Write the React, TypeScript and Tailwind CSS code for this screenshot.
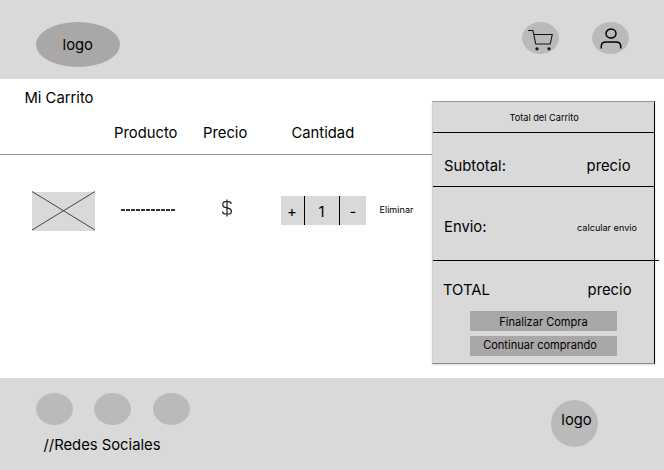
import React from "react";

function CartIcon() {
  return (
    <svg width="28" height="22" viewBox="0 0 28 22" fill="none" stroke="#111" strokeWidth="1.1" className="mt-[4px] shrink-0">
      <path d="M1 1.5H6L8.7 15H23.2L25.3 5.5H6.9" strokeLinejoin="round" />
      <circle cx="10" cy="19.8" r="1.1" fill="#222" />
      <circle cx="22" cy="19.8" r="1.1" fill="#222" />
    </svg>
  );
}

function UserIcon() {
  return (
    <svg width="22" height="22" viewBox="0 0 22 22" fill="none" stroke="#000" strokeWidth="1.5" className="mt-[3px] shrink-0">
      <ellipse cx="11" cy="5.5" rx="5" ry="4.5" />
      <path d="M1.3 20.5V18Q1.3 13.9 6 13.9H16Q20.7 13.9 20.7 18V20.5" />
    </svg>
  );
}

function Header() {
  return (
    <header className="flex h-[79px] items-start bg-[#d9d9d9]">
      <div className="ml-[35.5px] mt-[22px] flex h-[45px] w-[84.5px] items-center justify-center rounded-[50%] bg-[#a9a7a7]">
        logo
      </div>
      <div className="ml-auto mr-[35px] mt-[21.5px] flex gap-[33px]">
        <div className="flex h-[32px] w-[37px] items-center justify-center rounded-[50%] bg-[#bababa]">
          <CartIcon />
        </div>
        <div className="flex h-[32px] w-[37px] items-center justify-center rounded-[50%] bg-[#bababa]">
          <UserIcon />
        </div>
      </div>
    </header>
  );
}

function CartTable() {
  return (
    <section className="w-[432px] shrink-0 pt-[9px]">
      <h1 className="pl-[24.5px]">Mi Carrito</h1>
      <div className="-mr-px mt-[14px] flex h-[33px] border-b border-[#999] pl-[114px] pt-[0.6px]">
        <span className="w-[89px]">Producto</span>
        <span className="w-[88.5px]">Precio</span>
        <span>Cantidad</span>
      </div>
      <div className="flex pt-[36px]">
        <svg width="63" height="40" viewBox="0 0 63 40" className="ml-[32px] shrink-0">
          <rect y="1" width="63" height="39" fill="#d9d9d9" />
          <path d="M0 .5L63 39M0 39L63 .5" stroke="#444" strokeWidth="1" />
        </svg>
        <div className="ml-[26px] mt-[18px] h-[1.5px] w-[55px] bg-[repeating-linear-gradient(90deg,#333_0_4px,transparent_4px_5px)]" />
        <svg width="12" height="18" viewBox="0 0 12 18" fill="none" stroke="#222" strokeWidth="1.2" className="ml-[45px] mt-[8px]">
          <path d="M6 .5V17.5M10.2 5Q10 2.7 7.8 2.7H4.2Q1.8 2.7 1.8 5.4Q1.8 8 4.2 8.4L7.8 9.3Q10.4 9.9 10.4 12.5Q10.4 15 7.8 15H4.2Q1.8 15 1.5 12.7" />
        </svg>
        <div className="ml-[48px] mt-[5px] flex h-[29px] w-[85px] items-center bg-[#d9d9d9] text-center">
          <span className="h-full w-[23px] pr-px pt-[5.6px]">+</span>
          <span className="h-full w-[36px] border-x border-black pr-px pt-[5.6px]">1</span>
          <span className="h-full w-[26px] pt-[5.6px]">-</span>
        </div>
        <button className="ml-[13.5px] mt-[9px] h-[20px] text-[9.1px] leading-[20px]">Eliminar</button>
      </div>
    </section>
  );
}

function Summary() {
  return (
    <aside className="mt-[22px] h-[263px] w-[223px] shrink-0 border border-b-[#888] border-l-[#cfcfcf] border-r-black border-t-[#999] bg-[#d9d9d9] shadow-[0_1px_2px_rgba(0,0,0,0.15)]">
      <h2 className="h-[31px] border-b border-black pl-[76.5px] pt-[6px] text-[9.2px]">Total del Carrito</h2>
      <div className="flex h-[54px] justify-between border-b border-black pl-[11px] pr-[23.5px] pt-[22.6px]">
        <span>Subtotal:</span>
        <span>precio</span>
      </div>
      <div className="-mr-[5px] flex h-[74px] justify-between border-b border-black pl-[11px] pr-[22px] pt-[30px]">
        <span>Envio:</span>
        <span className="pt-[1px] text-[9.15px]">calcular envio</span>
      </div>
      <div className="flex justify-between pl-[10px] pr-[22.5px] pt-[19px]">
        <span>TOTAL</span>
        <span>precio</span>
      </div>
      <div className="ml-[37px] mt-[11px] flex w-[147px] flex-col gap-[5px] text-[11.05px] leading-[20px]">
        <button className="h-[20px] bg-[#a9a7a7]">
          <span className="block pt-px">Finalizar Compra</span>
        </button>
        <button className="flex h-[20px] items-start justify-center bg-[#a9a7a7] pr-[7px] leading-[19px]">
          Continuar comprando
        </button>
      </div>
    </aside>
  );
}

function Footer() {
  return (
    <footer className="flex h-[92px] items-start justify-between bg-[#d9d9d9]">
      <div className="pl-[36px] pt-[15px]">
        <div className="flex gap-[21.3px]">
          {[0, 1, 2].map((item) => (
            <div key={item} className="h-[32px] w-[37px] rounded-[50%] bg-[#bababa]" />
          ))}
        </div>
        <p className="ml-[7.5px] mt-[9.5px]">//Redes Sociales</p>
      </div>
      <div className="mr-[66px] mt-[22px] flex h-[47px] w-[47px] justify-center rounded-full bg-[#bababa] pl-[4px] pt-[10px]">
        logo
      </div>
    </footer>
  );
}

export default function App() {
  return (
    <div className="h-[470px] w-[664px] overflow-hidden bg-white font-['Inter',sans-serif] text-[14.8px] leading-[20px] text-black">
      <Header />
      <main className="flex h-[299px]">
        <CartTable />
        <Summary />
      </main>
      <Footer />
    </div>
  );
}
